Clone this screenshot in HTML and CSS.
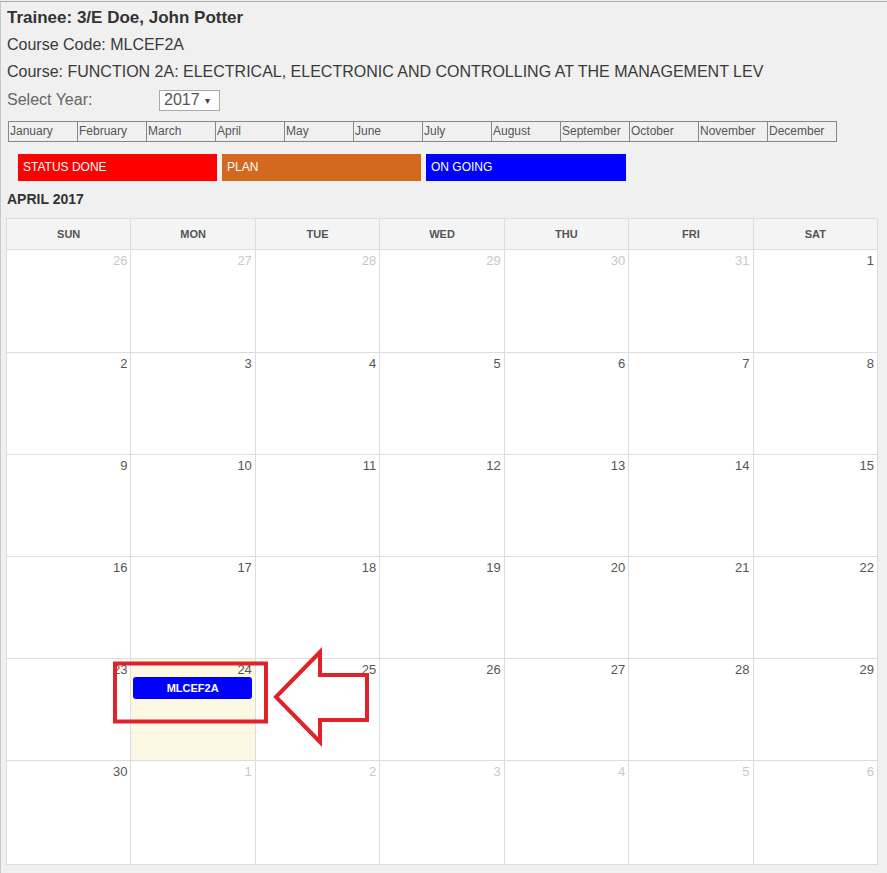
FILE: index.html
```html
<!DOCTYPE html>
<html lang="en">
<head>
<meta charset="utf-8">
<title>Trainee Calendar</title>
<link rel="stylesheet" href="styles.css">
</head>
<body>
<div class="page">
  <h1 class="title">Trainee: 3/E Doe, John Potter</h1>
  <div class="info">Course Code: MLCEF2A</div>
  <div class="info">Course: FUNCTION 2A: ELECTRICAL, ELECTRONIC AND CONTROLLING AT THE MANAGEMENT LEV</div>
  <div class="year-row">
    <span class="year-label">Select Year:</span>
    <span class="year-select">2017 <span class="caret">&#9662;</span></span>
  </div>

  <div class="months">
    <span class="month">January</span>
    <span class="month">February</span>
    <span class="month">March</span>
    <span class="month">April</span>
    <span class="month">May</span>
    <span class="month">June</span>
    <span class="month">July</span>
    <span class="month">August</span>
    <span class="month">September</span>
    <span class="month">October</span>
    <span class="month">November</span>
    <span class="month">December</span>
  </div>

  <div class="legend">
    <div class="legend-item done">STATUS DONE</div>
    <div class="legend-item plan">PLAN</div>
    <div class="legend-item going">ON GOING</div>
  </div>

  <h2 class="month-title">APRIL 2017</h2>

  <div class="calendar">
    <div class="cal-head">
      <div class="dow">SUN</div><div class="dow">MON</div><div class="dow">TUE</div><div class="dow">WED</div><div class="dow">THU</div><div class="dow">FRI</div><div class="dow">SAT</div>
    </div>
    <div class="cal-body">
      <div class="day other"><span class="num">26</span></div>
      <div class="day other"><span class="num">27</span></div>
      <div class="day other"><span class="num">28</span></div>
      <div class="day other"><span class="num">29</span></div>
      <div class="day other"><span class="num">30</span></div>
      <div class="day other"><span class="num">31</span></div>
      <div class="day"><span class="num">1</span></div>

      <div class="day"><span class="num">2</span></div>
      <div class="day"><span class="num">3</span></div>
      <div class="day"><span class="num">4</span></div>
      <div class="day"><span class="num">5</span></div>
      <div class="day"><span class="num">6</span></div>
      <div class="day"><span class="num">7</span></div>
      <div class="day"><span class="num">8</span></div>

      <div class="day"><span class="num">9</span></div>
      <div class="day"><span class="num">10</span></div>
      <div class="day"><span class="num">11</span></div>
      <div class="day"><span class="num">12</span></div>
      <div class="day"><span class="num">13</span></div>
      <div class="day"><span class="num">14</span></div>
      <div class="day"><span class="num">15</span></div>

      <div class="day"><span class="num">16</span></div>
      <div class="day"><span class="num">17</span></div>
      <div class="day"><span class="num">18</span></div>
      <div class="day"><span class="num">19</span></div>
      <div class="day"><span class="num">20</span></div>
      <div class="day"><span class="num">21</span></div>
      <div class="day"><span class="num">22</span></div>

      <div class="day"><span class="num">23</span></div>
      <div class="day today"><span class="num">24</span><div class="event">MLCEF2A</div></div>
      <div class="day"><span class="num">25</span></div>
      <div class="day"><span class="num">26</span></div>
      <div class="day"><span class="num">27</span></div>
      <div class="day"><span class="num">28</span></div>
      <div class="day"><span class="num">29</span></div>

      <div class="day"><span class="num">30</span></div>
      <div class="day other"><span class="num">1</span></div>
      <div class="day other"><span class="num">2</span></div>
      <div class="day other"><span class="num">3</span></div>
      <div class="day other"><span class="num">4</span></div>
      <div class="day other"><span class="num">5</span></div>
      <div class="day other"><span class="num">6</span></div>
    </div>
  </div>

  <svg class="annotation" width="887" height="873" viewBox="0 0 887 873" aria-hidden="true">
    <rect x="115" y="663.5" width="151" height="58" fill="none" stroke="#e2222b" stroke-width="4"/>
    <path d="M276 697 L320 652 L320 675 L367 675 L367 720 L320 720 L320 742 Z" fill="none" stroke="#e2222b" stroke-width="4" stroke-linejoin="miter"/>
  </svg>
</div>
</body>
</html>
```

FILE: styles.css
```css
* { box-sizing: border-box; }

html, body {
  margin: 0;
  padding: 0;
  background: #f0f0f0;
}

body {
  font-family: "Liberation Sans", Arial, sans-serif;
  color: #444;
}

.page {
  position: relative;
  width: 887px;
  height: 873px;
  margin-top: 1px;
  border-top: 1px solid #a8a8a8;
  border-left: 1px solid #c8c8c8;
  padding: 2px 0 0 6px;
  overflow: hidden;
}

.title {
  margin: 0;
  font-size: 17px;
  line-height: 27px;
  font-weight: bold;
  color: #333;
}

.info {
  font-size: 16px;
  line-height: 27px;
  color: #3a3a3a;
  white-space: nowrap;
}

.year-row {
  display: flex;
  align-items: center;
  height: 27px;
  margin-top: 1px;
  font-size: 16px;
}

.year-label {
  width: 152px;
  color: #666;
}

.year-select {
  display: inline-flex;
  align-items: center;
  width: 61px;
  height: 21px;
  margin-top: 1px;
  padding-left: 4px;
  background: #fff;
  border: 1px solid #aaa;
  color: #555;
  font-size: 16px;
}

.caret {
  font-size: 10px;
  margin-left: 5px;
  color: #444;
}

.months {
  display: flex;
  margin: 8px 0 0 1px;
}

.month {
  width: 69px;
  height: 21px;
  border: 1px solid #888;
  border-left: none;
  padding-left: 1px;
  font-size: 12px;
  line-height: 19px;
  color: #555;
}

.month:first-child {
  width: 70px;
  border-left: 1px solid #888;
}

.legend {
  display: flex;
  gap: 5px;
  margin: 12px 0 0 11px;
}

.legend-item {
  width: 199px;
  height: 27px;
  padding-left: 5px;
  font-size: 12px;
  line-height: 26px;
  color: #fff;
}

.legend-item.done { background: #ff0000; }
.legend-item.plan { background: #d2691e; }
.legend-item.going { background: #0000ff; width: 200px; }

.month-title {
  margin: 9px 0 0;
  font-size: 14px;
  line-height: 18px;
  font-weight: bold;
  color: #333;
}

.calendar {
  width: 872px;
  margin: 10px 0 0 -1px;
  border-top: 1px solid #ddd;
  border-left: 1px solid #ddd;
}

.cal-head,
.cal-body {
  display: grid;
  grid-template-columns: repeat(7, 1fr);
}

.cal-body {
  grid-template-rows: 103px 102px 102px 102px 102px 104px;
}

.dow {
  height: 31px;
  border-right: 1px solid #ddd;
  border-bottom: 1px solid #ddd;
  background: #f4f4f4;
  text-align: center;
  font-size: 11px;
  line-height: 30px;
  font-weight: bold;
  color: #555;
}

.day {
  position: relative;
  background: #fff;
  border-right: 1px solid #ddd;
  border-bottom: 1px solid #ddd;
  padding: 3px 3px 0 2px;
  text-align: right;
}

.day .num {
  display: block;
  font-size: 13px;
  line-height: 15px;
  color: #555;
}

.day.other .num {
  color: #c8c8c8;
}

.day.today {
  background: #fcf8e3;
}

.event {
  margin-top: 0;
  height: 22px;
  border-radius: 3px;
  background: #0000ff;
  color: #fff;
  text-align: center;
  font-size: 11px;
  font-weight: bold;
  line-height: 22px;
}

.annotation {
  position: absolute;
  top: -2px;
  left: -1px;
  pointer-events: none;
}
```
